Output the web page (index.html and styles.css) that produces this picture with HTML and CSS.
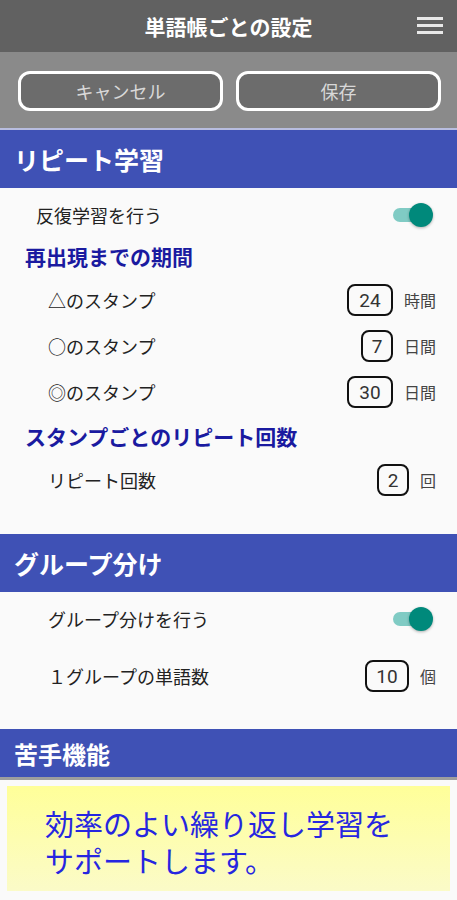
FILE: index.html
```html
<!DOCTYPE html>
<html lang="ja">
<head>
    <meta charset="UTF-8">
    <meta name="viewport" content="width=device-width, initial-scale=1.0">
    <title>単語帳ごとの設定</title>
    <link rel="stylesheet" href="styles.css">
</head>
<body>
    <div class="appbar">
        <h1>単語帳ごとの設定</h1>
        <div class="menu"><span></span><span></span><span></span></div>
    </div>
    <div class="toolbar">
        <button class="btn">キャンセル</button>
        <button class="btn">保存</button>
    </div>

    <div class="section-head">リピート学習</div>
    <div class="section">
        <div class="row row-switch indent1">
            <span>反復学習を行う</span>
            <div class="switch"><div class="knob"></div></div>
        </div>
        <div class="sub-head">再出現までの期間</div>
        <div class="row indent2">
            <span>△のスタンプ</span>
            <div class="value"><span class="num w46">24</span><span class="unit">時間</span></div>
        </div>
        <div class="row indent2">
            <span>○のスタンプ</span>
            <div class="value"><span class="num w32">7</span><span class="unit">日間</span></div>
        </div>
        <div class="row indent2">
            <span>◎のスタンプ</span>
            <div class="value"><span class="num w46">30</span><span class="unit">日間</span></div>
        </div>
        <div class="sub-head">スタンプごとのリピート回数</div>
        <div class="row indent2 last">
            <span>リピート回数</span>
            <div class="value"><span class="num w32">2</span><span class="unit">回</span></div>
        </div>
    </div>

    <div class="section-head">グループ分け</div>
    <div class="section">
        <div class="row row-switch indent2">
            <span>グループ分けを行う</span>
            <div class="switch"><div class="knob"></div></div>
        </div>
        <div class="row indent2 spaced last2">
            <span>１グループの単語数</span>
            <div class="value"><span class="num w44">10</span><span class="unit">個</span></div>
        </div>
    </div>

    <div class="section-head small">苦手機能</div>
    <div class="ad">
        <p>効率のよい繰り返し学習を<br>サポートします。</p>
    </div>
</body>
</html>
```

FILE: styles.css
```css
body {
    margin: 0;
    font-family: "Noto Sans CJK JP", "Noto Sans", sans-serif;
    background-color: #fafafa;
    color: #222;
}
.appbar {
    height: 52px;
    background-color: #616161;
    display: flex;
    align-items: center;
    justify-content: center;
    position: relative;
}
.appbar h1 {
    margin: 0;
    font-size: 21px;
    font-weight: bold;
    color: #fff;
}
.menu {
    position: absolute;
    right: 14px;
    top: 17px;
    display: flex;
    flex-direction: column;
    gap: 4px;
}
.menu span {
    display: block;
    width: 26px;
    height: 3px;
    background: #e8e8e8;
}
.toolbar {
    background-color: #8a8a8a;
    display: flex;
    gap: 13px;
    padding: 19px 16px 17px 18px;
    border-bottom: 2px solid #b8bde0;
}
.btn {
    flex: 1;
    height: 40px;
    background-color: #6c6c6c;
    border: 3px solid #fff;
    border-radius: 12px;
    color: #d8d8d8;
    font-family: inherit;
    font-size: 18px;
}
.section-head {
    background-color: #3f51b5;
    color: #fff;
    font-size: 25px;
    font-weight: bold;
    height: 58px;
    display: flex;
    align-items: center;
    padding-left: 14px;
}
.section-head.small {
    font-size: 24px;
    height: 48px;
    border-bottom: 3px solid #9e9e9e;
}
.section {
    padding-top: 7px;
}
.row {
    display: flex;
    align-items: center;
    justify-content: space-between;
    height: 46px;
    font-size: 18px;
    padding-right: 21px;
}
.row.last {
    margin-bottom: 31px;
}
.row.spaced {
    margin-top: 14px;
}
.row.last2 {
    margin-bottom: 30px;
}
.row-switch {
    height: 40px;
    padding-right: 24px;
}
.indent1 {
    padding-left: 36px;
}
.indent2 {
    padding-left: 48px;
}
.sub-head {
    color: #1a1aa0;
    font-size: 21px;
    font-weight: bold;
    padding-left: 25px;
    height: 42px;
    display: flex;
    align-items: center;
}
.value {
    display: flex;
    align-items: center;
    gap: 11px;
}
.num {
    box-sizing: border-box;
    height: 32px;
    border: 2.5px solid #111;
    border-radius: 8px;
    display: flex;
    align-items: center;
    justify-content: center;
    font-size: 19px;
    color: #333;
    font-family: "Roboto", sans-serif;
}
.w46 { width: 46px; }
.w44 { width: 44px; }
.w32 { width: 32px; }
.unit {
    font-size: 16px;
    color: #444;
}
.switch {
    width: 28px;
    height: 14px;
    border-radius: 7px;
    background-color: #80cbc4;
    position: relative;
    margin-right: 12px;
}
.knob {
    position: absolute;
    right: -12px;
    top: -5px;
    width: 24px;
    height: 24px;
    border-radius: 50%;
    background-color: #00897b;
    box-shadow: 0 1px 3px rgba(0, 0, 0, 0.3);
}
.ad {
    box-sizing: border-box;
    margin: 6px 7px 7px 7px;
    height: 105px;
    background: linear-gradient(#ffff99, #fbfbc8);
    display: flex;
    align-items: center;
    padding: 6px 0 0 38px;
}
.ad p {
    margin: 0;
    color: #2626e0;
    font-size: 29px;
    line-height: 37px;
}
```
